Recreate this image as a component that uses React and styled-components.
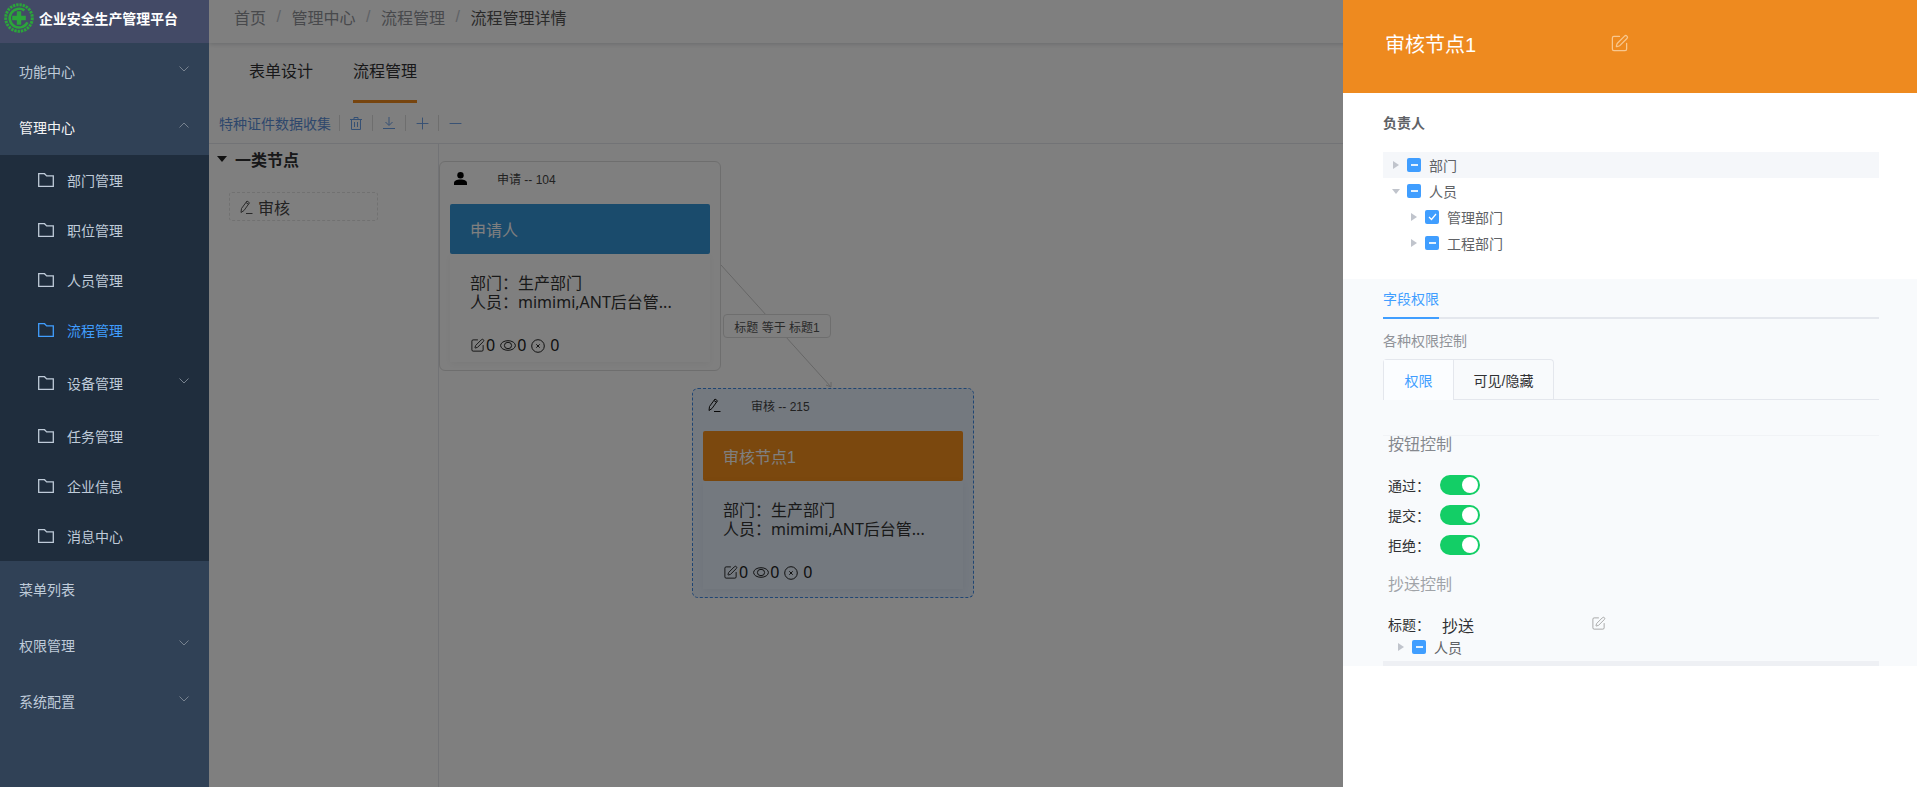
import React from "react";
import styled, { createGlobalStyle } from "styled-components";
import { SquarePen, Plus, Minus } from "lucide-react";

const FONT = `"Liberation Sans", "Noto Sans CJK SC", sans-serif`;

const GlobalStyle = createGlobalStyle`
  html, body { margin: 0; padding: 0; height: 100%; overflow: hidden; }
  body { font-family: ${FONT}; background: #fff; }
  * { box-sizing: border-box; }
`;

const Page = styled.div`
  position: relative;
  display: flex;
  width: 1917px;
  height: 787px;
  overflow: hidden;
`;

/* sidebar */
const Sidebar = styled.aside`
  position: relative;
  z-index: 3;
  width: 209px;
  flex: none;
  background: #304156;
`;

const Brand = styled.div`
  height: 43px;
  display: flex;
  align-items: center;
  gap: 5px;
  padding: 0 0 7px 4px;
  background: #434a66;
  color: #fff;
  font-size: 13.900px;
  font-weight: 700;
  white-space: nowrap;
`;

const MenuItem = styled.div`
  height: 56px;
  display: flex;
  align-items: center;
  padding-left: 19px;
  font-size: 14px;
  color: ${({ $strong }) => ($strong ? "#f4f4f5" : "#bfcbd9")};
  position: relative;
`;

const SubMenu = styled.div`
  background: #1f2d3d;
`;

const SubItem = styled.div`
  height: ${({ $tall }) => ($tall ? "56px" : "50px")};
  display: flex;
  align-items: center;
  gap: 13px;
  padding-left: 38px;
  font-size: 14px;
  color: ${({ $active }) => ($active ? "#409eff" : "#bfcbd9")};
  position: relative;
`;

const ArrowBox = styled.svg`
  position: absolute;
  left: 179px;
  top: 50%;
  margin-top: -5px;
`;

const Arrow = ({ up }) => (
  <ArrowBox width="10" height="6" viewBox="0 0 10 6" fill="none" stroke="#77828f" strokeWidth="1">
    <path d={up ? "M.5 5.500 5 1l4.500 4.500" : "M.5.5 5 5 9.500.5"} />
  </ArrowBox>
);

const Folder = () => (
  <svg width="16" height="14" viewBox="0 0 16 14" fill="none" stroke="currentColor" strokeWidth="1.300" style={{ flex: "none" }}>
    <path d="M.7.7h5.800l2.200 2.200h6.600v10.400H.7z" />
  </svg>
);

const Logo = () => (
  <svg width="30" height="30" viewBox="0 0 30 30" fill="none">
    <circle cx="15" cy="15" r="13.300" stroke="#2ba53a" strokeWidth="3" strokeDasharray="2.400 0.900" />
    <path d="M20.500 7.400a9.400 9.400 0 1 0 3 12" stroke="#2ba53a" strokeWidth="2.600" />
    <path d="M12.800 8.200h4.400v4.600h4.600v4.400h-4.600v4.600h-4.400v-4.600H8.200v-4.400h4.600z" fill="#2ba53a" />
  </svg>
);

/* main area */
const Main = styled.main`
  flex: 1;
  min-width: 0;
  display: flex;
  flex-direction: column;
  background: #fff;
`;

const TopBar = styled.header`
  height: 43px;
  flex: none;
  display: flex;
  align-items: center;
  padding: 0 0 9px 25px;
  font-size: 16px;
  color: #97a8be;
  box-shadow: 0 1px 5px rgba(0, 21, 41, 0.18);
`;

const Crumb = styled.span`
  color: ${({ $last }) => ($last ? "#555" : "#909399")};
`;

const Slash = styled.span`
  margin: 0 10.500px;
  color: #c0c4cc;
`;

const TabBar = styled.div`
  height: 60px;
  flex: none;
  display: flex;
  gap: 40px;
  padding-left: 40px;
`;

const Tab = styled.div`
  height: 60px;
  display: flex;
  align-items: center;
  padding-bottom: 4px;
  font-size: 16px;
  color: #303133;
  border-bottom: 3px solid ${({ $active }) => ($active ? "#ee8a1f" : "transparent")};
`;

const Toolbar = styled.div`
  height: 41px;
  flex: none;
  display: flex;
  align-items: center;
  padding-left: 10px;
  border-bottom: 1px solid #e4e7ed;
`;

const ToolTitle = styled.span`
  width: 120px;
  font-size: 14px;
  color: #5d8fd8;
  white-space: nowrap;
`;

const ToolIcon = styled.span`
  width: 33px;
  height: 16px;
  display: flex;
  align-items: center;
  justify-content: center;
  border-left: 1px solid #ddd;
  color: #6aa0e8;
`;

const Work = styled.div`
  flex: 1;
  display: flex;
  min-height: 0;
`;

const Stencil = styled.div`
  width: 230px;
  flex: none;
  border-right: 1px solid #e4e7ed;
  padding-left: 8px;
`;

const StencilHead = styled.div`
  height: 30px;
  display: flex;
  align-items: center;
  gap: 8px;
  font-size: 16px;
  font-weight: 700;
  color: #303133;
`;

const Caret = styled.i`
  width: 0;
  height: 0;
  border-left: 5px solid transparent;
  border-right: 5px solid transparent;
  border-top: 6px solid #222;
`;

const StencilItem = styled.div`
  width: 149px;
  height: 29px;
  margin: 18px 0 0 12px;
  display: flex;
  align-items: center;
  gap: 5px;
  padding-left: 9px;
  border: 1px dashed #e2e2e2;
  border-radius: 3px;
  font-size: 16px;
  color: #444;
`;

const Canvas = styled.div`
  flex: 1;
  position: relative;
`;

const Edge = styled.svg`
  position: absolute;
  left: 0;
  top: 0;
`;

const EdgeLabel = styled.div`
  position: absolute;
  left: 284px;
  top: 170px;
  width: 108px;
  height: 24px;
  display: flex;
  align-items: center;
  justify-content: center;
  background: #fff;
  border: 1px solid #ddd;
  border-radius: 4px;
  font-size: 12px;
  color: #555;
  white-space: nowrap;
`;

const Node = styled.div`
  position: absolute;
  left: ${({ $x }) => $x}px;
  top: ${({ $y }) => $y}px;
  width: 282px;
  height: 210px;
  padding: 0 10px;
  border-radius: 6px;
  border: 1px ${({ $selected }) => ($selected ? "dashed #3f8ae6" : "solid #ddd")};
  background: ${({ $selected }) => ($selected ? "#e8f2ff" : "#fff")};
`;

const NodeHead = styled.div`
  height: 42px;
  display: flex;
  align-items: center;
  padding: 0 0 10px 4px;
  font-size: 12px;
  color: #444;
`;

const NodeHeadText = styled.span`
  margin-left: 30px;
`;

const NodeBanner = styled.div`
  height: 50px;
  display: flex;
  align-items: center;
  padding-left: 20px;
  border-radius: 2px;
  font-size: 16px;
  color: #fff;
  background: ${({ $color }) => $color};
`;

const NodeBody = styled.div`
  height: 108px;
  padding: 20px 0 0 20px;
  font-family: "Noto Sans", "Noto Sans CJK SC", sans-serif;
  font-size: 16px;
  line-height: 19px;
  color: #333;
  box-shadow: 0 2px 8px rgba(0, 0, 0, 0.05);
`;

const Stats = styled.div`
  margin-top: 24px;
  display: flex;
  align-items: center;
  gap: 1px;
  color: #222;
`;

const StatGap = styled.span`
  width: 3px;
`;

const PersonIcon = () => (
  <svg width="13" height="13" viewBox="0 0 13 13" fill="#000">
    <circle cx="6.500" cy="3.300" r="3.200" />
    <path d="M0 13v-1.800C0 8.800 2.500 7.500 6.500 7.500s6.500 1.300 6.500 3.700V13z" />
  </svg>
);

const PencilIcon = ({ color = "#111" }) => (
  <svg width="14" height="14" viewBox="0 0 14 14" fill="none" stroke={color} strokeWidth="1">
    <path d="M2.500 8.500 8 1l2.500 1.800L5 10.500l-3 2zM7 2.500l2.500 1.800M7 13.500h6.500" />
  </svg>
);

const EyeIcon = () => (
  <svg width="16" height="11" viewBox="0 0 16 11" fill="none" stroke="#222" strokeWidth="1">
    <ellipse cx="8" cy="5.500" rx="7.400" ry="4.800" />
    <ellipse cx="8" cy="5.500" rx="3.600" ry="3.200" />
  </svg>
);

const CloseIcon = () => (
  <svg width="14" height="14" viewBox="0 0 14 14" fill="none" stroke="#222" strokeWidth="1">
    <circle cx="7" cy="7" r="6.300" />
    <path d="M5.300 5.300l3.400 3.400M8.700 5.300l-3.400 3.400" />
  </svg>
);

const NodeCard = ({ x, y, selected, icon, head, banner, color }) => (
  <Node $x={x} $y={y} $selected={selected}>
    <NodeHead>
      {icon}
      <NodeHeadText>{head}</NodeHeadText>
    </NodeHead>
    <NodeBanner $color={color}>{banner}</NodeBanner>
    <NodeBody>
      <div>{"部门\uFF1A生产部门"}</div>
      <div>{"人员\uFF1Amimimi,ANT后台管..."}</div>
      <Stats>
        <SquarePen size={15} strokeWidth={1.500} />
        0<StatGap />
        <EyeIcon />
        0<StatGap />
        <CloseIcon />
        <StatGap />
        0
      </Stats>
    </NodeBody>
  </Node>
);

const Overlay = styled.div`
  position: absolute;
  inset: 0;
  z-index: 2;
  background: rgba(0, 0, 0, 0.5);
`;

/* drawer */
const Drawer = styled.section`
  position: absolute;
  z-index: 4;
  top: 0;
  right: 0;
  bottom: 0;
  width: 574px;
  background: #fff;
`;

const DrawerHead = styled.div`
  height: 93px;
  display: flex;
  align-items: center;
  padding: 0 0 7px 42px;
  background: #ee8a1f;
  color: #fff;
  font-size: 20px;
`;

const DrawerTitle = styled.span`
  width: 225px;
`;

const Owner = styled.div`
  padding: 20px 38px 23px 40px;
`;

const OwnerLabel = styled.div`
  height: 20px;
  line-height: 20px;
  font-size: 14px;
  font-weight: 700;
  color: #606266;
  margin-bottom: 19px;
`;

const TreeRow = styled.div`
  height: 26px;
  display: flex;
  align-items: center;
  padding-left: ${({ $indent }) => $indent}px;
  background: ${({ $hover }) => ($hover ? "#f5f7fa" : "transparent")};
  font-size: 14px;
  color: #606266;
`;

const TreeCaret = styled.i`
  width: 0;
  height: 0;
  margin-right: ${({ $open }) => ($open ? "7px" : "8px")};
  ${({ $open }) =>
    $open
      ? `border-left: 4px solid transparent; border-right: 4px solid transparent; border-top: 5px solid #c0c4cc; margin-left: -1px;`
      : `border-top: 4px solid transparent; border-bottom: 4px solid transparent; border-left: 6px solid #c0c4cc; margin-left: 0;`}
`;

const Check = styled.span`
  width: 14px;
  height: 14px;
  margin-right: 8px;
  flex: none;
  display: flex;
  align-items: center;
  justify-content: center;
  border-radius: 2px;
  background: #409eff;
`;

const Dash = styled.i`
  width: 7px;
  height: 2px;
  background: #fff;
  opacity: 0.85;
`;

const TreeNode = ({ indent, label, open, checked, hover }) => (
  <TreeRow $indent={indent} $hover={hover}>
    <TreeCaret $open={open} />
    <Check>
      {checked ? (
        <svg width="9" height="8" viewBox="0 0 9 8" fill="none" stroke="#fff" strokeWidth="1.200">
          <path d="M1 4l2.500 2.500L8 1" />
        </svg>
      ) : (
        <Dash />
      )}
    </Check>
    {label}
  </TreeRow>
);

const Perms = styled.div`
  background: #f8fafc;
  padding: 0 38px 0 40px;
`;

const FieldTab = styled.div`
  height: 40px;
  position: relative;
  display: flex;
  align-items: center;
  font-size: 14px;
  color: #409eff;
  border-bottom: 2px solid #e4e7ed;
  &::after {
    content: "";
    position: absolute;
    left: 0;
    bottom: -2px;
    width: 56px;
    height: 2px;
    background: #409eff;
  }
`;

const Hint = styled.div`
  margin-top: 12px;
  height: 20px;
  line-height: 20px;
  font-size: 14px;
  color: #909399;
`;

const CardTabs = styled.div`
  margin-top: 8px;
  height: 41px;
  display: flex;
  border-bottom: 1px solid #e4e7ed;
`;

const CardGroup = styled.div`
  display: flex;
  height: 41px;
  border: 1px solid #e4e7ed;
  border-bottom: none;
  border-radius: 4px 4px 0 0;
`;

const CardTab = styled.div`
  width: ${({ $w }) => $w}px;
  display: flex;
  align-items: center;
  justify-content: center;
  font-size: 14px;
  color: ${({ $active }) => ($active ? "#409eff" : "#303133")};
  background: ${({ $active }) => ($active ? "#fbfdff" : "transparent")};
  border-left: ${({ $first }) => ($first ? "none" : "1px solid #e4e7ed")};
`;

const Rule = styled.div`
  margin-top: 35px;
  height: 1px;
  background: #f1f3f6;
`;

const GroupTitle = styled.div`
  margin: ${({ $top }) => $top}px 0 0 5px;
  height: 18px;
  line-height: 18px;
  font-size: 16px;
  color: ${({ $light }) => ($light ? "#a0a3a8" : "#85888e")};
`;

const SwitchList = styled.div`
  margin: 16px 0 0 5px;
`;

const SwitchRow = styled.div`
  height: 30px;
  display: flex;
  align-items: center;
  font-size: 14px;
  color: #303133;
`;

const RowLabel = styled.span`
  width: 52px;
`;

const Switch = styled.span`
  width: 40px;
  height: 20px;
  padding: 2px;
  display: flex;
  justify-content: flex-end;
  border-radius: 10px;
  background: #13ce66;
  &::after {
    content: "";
    width: 16px;
    height: 16px;
    border-radius: 50%;
    background: #fff;
  }
`;

const CopyRow = styled.div`
  margin: 20px 0 0 5px;
  height: 20px;
  display: flex;
  align-items: center;
  font-size: 14px;
  color: #303133;
`;

const CopyValue = styled.span`
  width: 149px;
  margin-left: 2px;
  font-size: 16px;
  padding-top: 2px;
`;

const CopyEdit = styled.span`
  color: #909090;
  display: flex;
  margin-top: -1px;
`;

const ScrollStrip = styled.div`
  height: 5px;
  margin-top: 1px;
  background: #eef0f4;
`;

const App = () => (
  <Page>
    <GlobalStyle />
    <Sidebar>
      <Brand>
        <Logo />
        企业安全生产管理平台
      </Brand>
      <MenuItem>功能中心<Arrow /></MenuItem>
      <MenuItem $strong>管理中心<Arrow up /></MenuItem>
      <SubMenu>
        <SubItem><Folder />部门管理</SubItem>
        <SubItem><Folder />职位管理</SubItem>
        <SubItem><Folder />人员管理</SubItem>
        <SubItem $active><Folder />流程管理</SubItem>
        <SubItem $tall><Folder />设备管理<Arrow /></SubItem>
        <SubItem><Folder />任务管理</SubItem>
        <SubItem><Folder />企业信息</SubItem>
        <SubItem><Folder />消息中心</SubItem>
      </SubMenu>
      <MenuItem>菜单列表</MenuItem>
      <MenuItem>权限管理<Arrow /></MenuItem>
      <MenuItem>系统配置<Arrow /></MenuItem>
    </Sidebar>

    <Main>
      <TopBar>
        <Crumb>首页</Crumb><Slash>/</Slash>
        <Crumb>管理中心</Crumb><Slash>/</Slash>
        <Crumb>流程管理</Crumb><Slash>/</Slash>
        <Crumb $last>流程管理详情</Crumb>
      </TopBar>
      <TabBar>
        <Tab>表单设计</Tab>
        <Tab $active>流程管理</Tab>
      </TabBar>
      <Toolbar>
        <ToolTitle>特种证件数据收集</ToolTitle>
        <ToolIcon>
          <svg width="12" height="13" viewBox="0 0 12 13" fill="none" stroke="currentColor">
            <path d="M0 2.500h12M1.500 2.500v10h9v-10M4 2.500V.5h4v2M4.500 5v5M7.500 5v5" />
          </svg>
        </ToolIcon>
        <ToolIcon>
          <svg width="12" height="12" viewBox="0 0 12 12" fill="none" stroke="currentColor">
            <path d="M6 0v8M2.500 5 6 8.500 9.500 5M0 11.500h12" />
          </svg>
        </ToolIcon>
        <ToolIcon><Plus size={19} strokeWidth={1.200} /></ToolIcon>
        <ToolIcon><Minus size={19} strokeWidth={1.200} /></ToolIcon>
      </Toolbar>
      <Work>
        <Stencil>
          <StencilHead><Caret />一类节点</StencilHead>
          <StencilItem><PencilIcon color="#555" />审核</StencilItem>
        </Stencil>
        <Canvas>
          <NodeCard
            x={0}
            y={17}
            icon={<PersonIcon />}
            head="申请 -- 104"
            banner="申请人"
            color="#3596d8"
          />
          <Edge width="420" height="260" fill="none" stroke="#ccc">
            <path d="M282 121 392 243M387 241l5 2 0-5" />
          </Edge>
          <EdgeLabel>标题 等于 标题1</EdgeLabel>
          <NodeCard
            x={253}
            y={244}
            selected
            icon={<PencilIcon />}
            head="审核 -- 215"
            banner="审核节点1"
            color="#f6901c"
          />
        </Canvas>
      </Work>
    </Main>

    <Overlay />

    <Drawer>
      <DrawerHead>
        <DrawerTitle>审核节点1</DrawerTitle>
        <SquarePen size={19} strokeWidth={1.600} color="#f8c78e" />
      </DrawerHead>
      <Owner>
        <OwnerLabel>负责人</OwnerLabel>
        <TreeNode indent={10} label="部门" hover />
        <TreeNode indent={10} label="人员" open />
        <TreeNode indent={28} label="管理部门" checked />
        <TreeNode indent={28} label="工程部门" />
      </Owner>
      <Perms>
        <FieldTab>字段权限</FieldTab>
        <Hint>各种权限控制</Hint>
        <CardTabs>
          <CardGroup>
            <CardTab $first $active $w={69}>权限</CardTab>
            <CardTab $w={100}>可见/隐藏</CardTab>
          </CardGroup>
        </CardTabs>
        <Rule />
        <GroupTitle $top={0}>按钮控制</GroupTitle>
        <SwitchList>
          <SwitchRow><RowLabel>{"通过\uFF1A"}</RowLabel><Switch /></SwitchRow>
          <SwitchRow><RowLabel>{"提交\uFF1A"}</RowLabel><Switch /></SwitchRow>
          <SwitchRow><RowLabel>{"拒绝\uFF1A"}</RowLabel><Switch /></SwitchRow>
        </SwitchList>
        <GroupTitle $top={16} $light>抄送控制</GroupTitle>
        <CopyRow>
          <RowLabel>{"标题\uFF1A"}</RowLabel>
          <CopyValue>抄送</CopyValue>
          <CopyEdit><SquarePen size={15} strokeWidth={1.200} /></CopyEdit>
        </CopyRow>
        <TreeNode indent={15} label="人员" />
        <ScrollStrip />
      </Perms>
    </Drawer>
  </Page>
);

export default App;
